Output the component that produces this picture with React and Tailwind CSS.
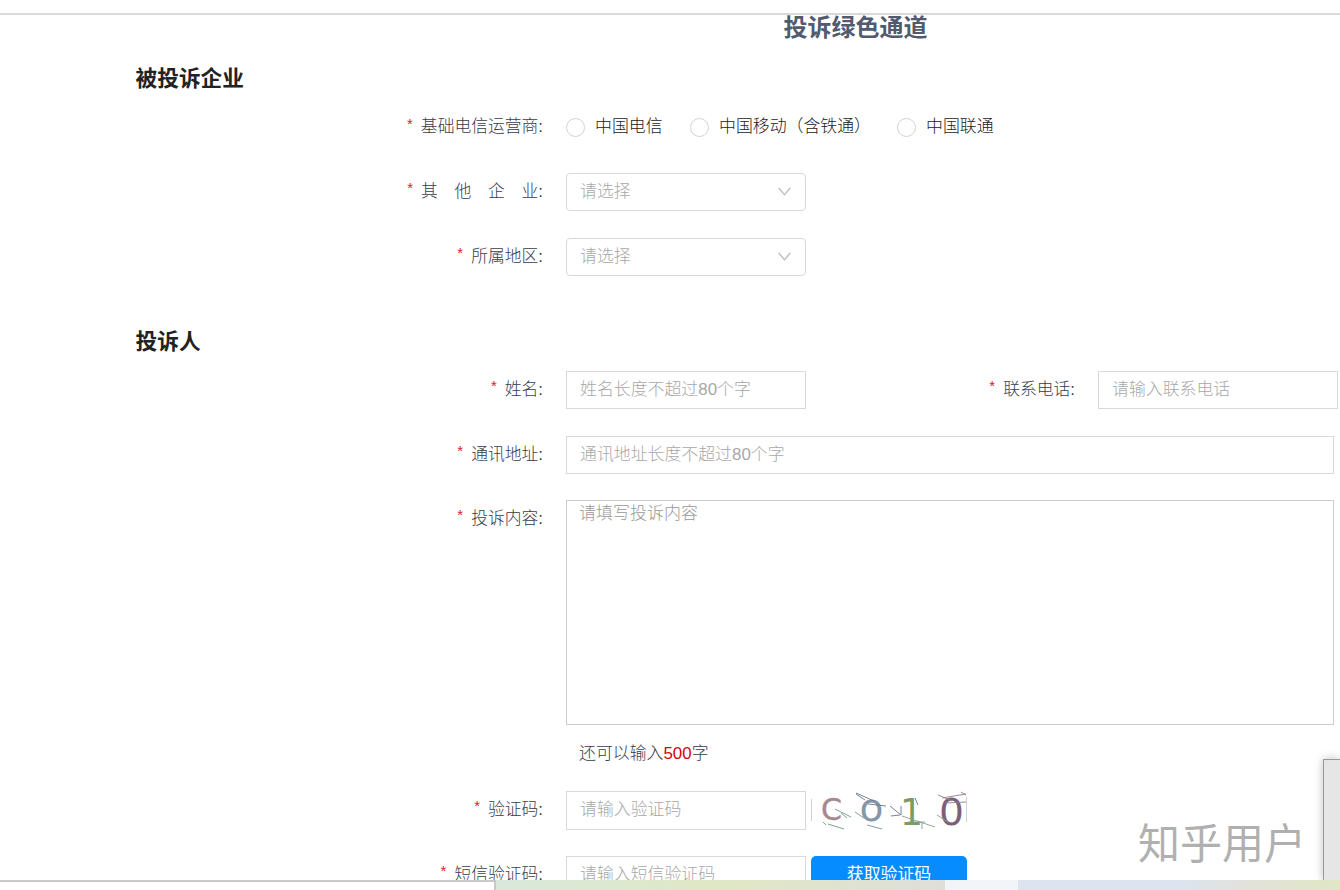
// src/pages/Complaint.jsx
import { useState } from 'react';

const fieldBox = 'h-[38px] border border-[#d9d9d9] bg-white px-[13px] text-[16.9px] text-[#515a6e] font-light placeholder:text-[#a8a8a8] placeholder:opacity-100 outline-none';

function Label({ children, className = '' }) {
  return (
    <div className={`flex w-[543px] shrink-0 justify-end text-[16.8px] leading-[38px] font-light text-[#363c4b] ${className}`}>
      <span className="mr-[8px] text-[15px] leading-[30px] font-normal text-[#d8232a]">*</span>
      <span className="whitespace-pre">{children}</span>
    </div>
  );
}

function Select() {
  return (
    <button type="button" className="ml-[23px] flex h-[38px] w-[240px] items-center justify-between rounded-[4px] border border-[#d9d9d9] pr-[14px] pl-[13px] text-[16.9px] leading-[36px] font-light text-[#a8a8a8]">
      <span>请选择</span>
      <svg className="-mt-px" width="13" height="9" viewBox="0 0 13 9" fill="none" stroke="#b8b8b8" strokeWidth="1.3">
        <path d="M0.7 0.8L6.5 7.8L12.3 0.8" />
      </svg>
    </button>
  );
}

function Captcha() {
  return (
    <svg className="ml-[5px]" width="158" height="40" viewBox="0 0 158 40" fill="none">
      <path d="M0.5 8V30M155.5 6V31" stroke="#d0d0d0" />
      <g fontFamily='"DejaVu Sans", sans-serif'>
        <text x="10" y="29" fontSize="31" fill="#a5898f" stroke="#a5898f" strokeWidth="0.4" textLength="21" lengthAdjust="spacingAndGlyphs">C</text>
        <text x="48.5" y="29.5" fontSize="39" fill="#8797a9" textLength="24" lengthAdjust="spacingAndGlyphs">o</text>
        <text x="89" y="34" fontSize="37" fill="#7d9a62" textLength="23" lengthAdjust="spacingAndGlyphs">1</text>
        <text x="128" y="34" fontSize="38" fill="#7b6178" textLength="25" lengthAdjust="spacingAndGlyphs">0</text>
      </g>
      <g strokeWidth="0.9">
        <path d="M12 31L15 34M17 33L33 38M24 18L40 26M30 22L36 27M44 21L53 27M56 34L71 38" stroke="#70968a" />
        <path d="M45 2L63 10M45 3L54 9M57 13L75 15M79 15L90 24V15M80 25L89 24M104 7L107 14" stroke="#65788a" />
        <path d="M91 25L124 36M97 31H114M111 32V38M126 24L137 31" stroke="#82a18a" />
        <path d="M127 4L141 10M131 7L155 3M134 12L155 11M150 1L155 4" stroke="#927f91" />
      </g>
    </svg>
  );
}

const operators = [
  { name: '中国电信', cls: 'w-[124px]' },
  { name: '中国移动（含铁通）', cls: 'w-[207px]' },
  { name: '中国联通', cls: 'w-[124px]' },
];

export default function App() {
  const [operator, setOperator] = useState('');
  const [content, setContent] = useState('');

  return (
    <div className="relative flex h-[890px] w-[1340px] flex-col overflow-hidden bg-white font-['Liberation_Sans','Noto_Sans_CJK_SC',sans-serif]">
      <div className="h-[15px] shrink-0 border-b-2 border-[#d9d9d9]" />

      <main className="h-[865px] shrink-0 overflow-hidden">
        <h1 className="h-[42px] pl-[371px] text-center text-[24px] leading-[25px] font-bold text-[#515a6e]">投诉绿色通道</h1>

        <section>
          <h2 className="h-[52px] pl-[135.5px] text-[21.7px] leading-[44px] font-bold text-[#222]">被投诉企业</h2>
          <div className="flex h-[64px]">
            <Label className="leading-[36px]!">基础电信运营商:</Label>
            <div className="ml-[23px] flex h-[36px] items-center">
              {operators.map(o => (
                <label key={o.name} className={`flex shrink-0 items-center text-[16.9px] leading-[36px] font-light text-[#222] ${o.cls}`}>
                  <input type="radio" name="operator" checked={operator === o.name} onChange={() => setOperator(o.name)} className="mr-[10px] size-[19px] shrink-0 appearance-none rounded-full border border-[#d3d3d3]" />
                  <span className="whitespace-nowrap">{o.name}</span>
                </label>
              ))}
            </div>
          </div>
          <div className="flex h-[65px]">
            <Label>
              <span className="flex w-[122px] justify-between"><span>其</span><span>他</span><span>企</span><span>业:</span></span>
            </Label>
            <Select />
          </div>
          <div className="flex h-[82px]">
            <Label>所属地区:</Label>
            <Select />
          </div>
        </section>

        <section>
          <h2 className="h-[51px] pl-[135.5px] text-[21.7px] leading-[44px] font-bold text-[#222]">投诉人</h2>
          <div className="flex h-[65px]">
            <Label>姓名:</Label>
            <input placeholder="姓名长度不超过80个字" className={`${fieldBox} ml-[23px] w-[240px]`} />
            <Label className="w-[269px]!">联系电话:</Label>
            <input placeholder="请输入联系电话" className={`${fieldBox} ml-[23px] w-[240px]`} />
          </div>
          <div className="flex h-[64px]">
            <Label>通讯地址:</Label>
            <input placeholder="通讯地址长度不超过80个字" className={`${fieldBox} ml-[23px] w-[768px]`} />
          </div>
          <div className="flex h-[225px]">
            <Label>投诉内容:</Label>
            <textarea value={content} onChange={e => setContent(e.target.value)} placeholder="请填写投诉内容" className="ml-[23px] h-[225px] w-[768px] resize-none border border-[#ccc] px-[12px] text-[17px] leading-[25px] font-light outline-none placeholder:text-[#999]" />
          </div>
          <p className="h-[66px] pl-[579px] text-[16.9px] leading-[58px] font-light text-[#363c4b]">
            还可以输入<span className="font-normal text-[#d9000f]">{500 - content.length}</span>字
          </p>
          <div className="flex h-[65px]">
            <Label>验证码:</Label>
            <input placeholder="请输入验证码" className={`${fieldBox} ml-[23px] h-[39px]! w-[240px] pb-[2px]`} />
            <Captcha />
          </div>
          <div className="flex h-[38px]">
            <Label>短信验证码:</Label>
            <input placeholder="请输入短信验证码" className={`${fieldBox} ml-[23px] w-[240px]`} />
            <button type="button" className="ml-[5px] h-[38px] w-[156px] rounded-[5px] bg-[#068cff] text-[16.9px] leading-[36px] text-white">获取验证码</button>
          </div>
        </section>
      </main>

      <footer className="flex h-[10px] shrink-0">
        <div className="w-[496px] border-t-2 border-r-2 border-[#c9c9c9] bg-white" />
        <div className="w-[449px] bg-linear-to-r from-[#d9e8dc] via-[#dfe8c4] to-[#dedfdb]" />
        <div className="w-[73px] bg-[#f1f4f9]" />
        <div className="flex-1 bg-linear-to-r from-[#dce4ef] from-50% via-[#e2e2dd] via-70% to-[#dfe7c3]" />
      </footer>

      <div className="absolute top-[759px] right-0 h-[121px] w-[17px] border-t border-l border-[#999] bg-[#e6e6e6] shadow-[0_0_10px_rgba(0,0,0,0.25)] [clip-path:inset(-14px_0_0_-14px)]" />
      <div className="absolute top-[815px] left-[1138px] text-[42px] leading-[60px] whitespace-nowrap text-[#b0b0b0]">知乎用户</div>
    </div>
  );
}
